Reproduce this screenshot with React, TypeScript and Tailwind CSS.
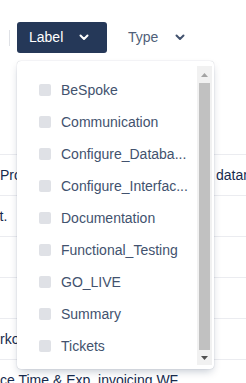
import React from "react";

const Chevron = ({ color }: { color: string }) => (
  <svg width="10" height="7" viewBox="0 0 10 7" fill="none">
    <path d="M1.5 1.5L5 5L8.5 1.5" stroke={color} strokeWidth="2" strokeLinecap="round" strokeLinejoin="round" />
  </svg>
);

const items = [
  "BeSpoke",
  "Communication",
  "Configure_Databa...",
  "Configure_Interfac...",
  "Documentation",
  "Functional_Testing",
  "GO_LIVE",
  "Summary",
  "Tickets",
];

export default function App() {
  return (
    <div
      className="relative w-[246px] h-[383px] overflow-hidden bg-white"
      style={{ fontFamily: '"Liberation Sans", Arial, sans-serif' }}
    >
      {/* toolbar */}
      <div className="flex items-center pt-[22px]">
        <div className="ml-[9px] w-px h-[16px] bg-[#dfe1e6]" />
        <div className="ml-[7px] flex h-[31px] w-[90px] items-center rounded-[3px] bg-[#253858] pl-[12px] text-[14px] text-white">
          <span>Label</span>
          <span className="ml-[16px] flex">
            <Chevron color="#ffffff" />
          </span>
        </div>
        <div className="ml-[21px] flex items-center text-[14px] text-[#505f79]">
          <span>Type</span>
          <span className="ml-[17px] flex">
            <Chevron color="#42526e" />
          </span>
        </div>
      </div>

      {/* table behind */}
      <div className="mt-[101px] text-[14px] text-[#172b4d]">
        <div className="flex h-[41px] items-center border-t border-[#ebecf0] whitespace-nowrap">
          <span className="w-[216px] shrink-0 overflow-hidden">Project Template</span>
          <span className="shrink-0">datamart</span>
        </div>
        <div className="flex h-[41px] items-center border-t border-[#ebecf0] whitespace-nowrap">
          <span className="ml-[-37px] shrink-0">Somet.</span>
        </div>
        <div className="flex h-[41px] items-center border-t border-[#ebecf0]" />
        <div className="flex h-[41px] items-center border-t border-[#ebecf0]" />
        <div className="flex h-[41px] items-center border-t border-[#ebecf0] whitespace-nowrap">
          <span>rkorder</span>
        </div>
        <div className="flex h-[41px] items-center border-t border-[#ebecf0] whitespace-nowrap">
          <span>ce Time &amp; Exp. invoicing WF</span>
        </div>
      </div>

      {/* dropdown */}
      <div className="absolute left-[17px] top-[61px] flex h-[308px] w-[197px] rounded-[4px] bg-white shadow-[0_4px_8px_-2px_rgba(9,30,66,0.25),0_0_1px_rgba(9,30,66,0.31)]">
        <div className="min-w-0 flex-1 pt-[13px]">
          {items.map((it) => (
            <div key={it} className="flex h-[32px] items-center pl-[22px] pr-[6px]">
              <span className="h-[12px] w-[12px] shrink-0 rounded-[2px] bg-[#dfe1e6]" />
              <span className="ml-[10px] whitespace-nowrap text-[14px] text-[#42526e]">{it}</span>
            </div>
          ))}
        </div>
        <div className="mb-[4px] mr-[2px] mt-[5px] flex w-[15px] shrink-0 flex-col bg-[#f1f1f1]">
          <div className="flex h-[17px] items-center justify-center">
            <svg width="7" height="4" viewBox="0 0 7 4">
              <path d="M0 4L3.5 0L7 4Z" fill="#a3a3a3" />
            </svg>
          </div>
          <div className="mx-[2px] flex-1 bg-[#c1c1c1]" />
          <div className="flex h-[15px] items-center justify-center">
            <svg width="7" height="4" viewBox="0 0 7 4">
              <path d="M0 0L3.5 4L7 0Z" fill="#505050" />
            </svg>
          </div>
        </div>
      </div>
    </div>
  );
}
